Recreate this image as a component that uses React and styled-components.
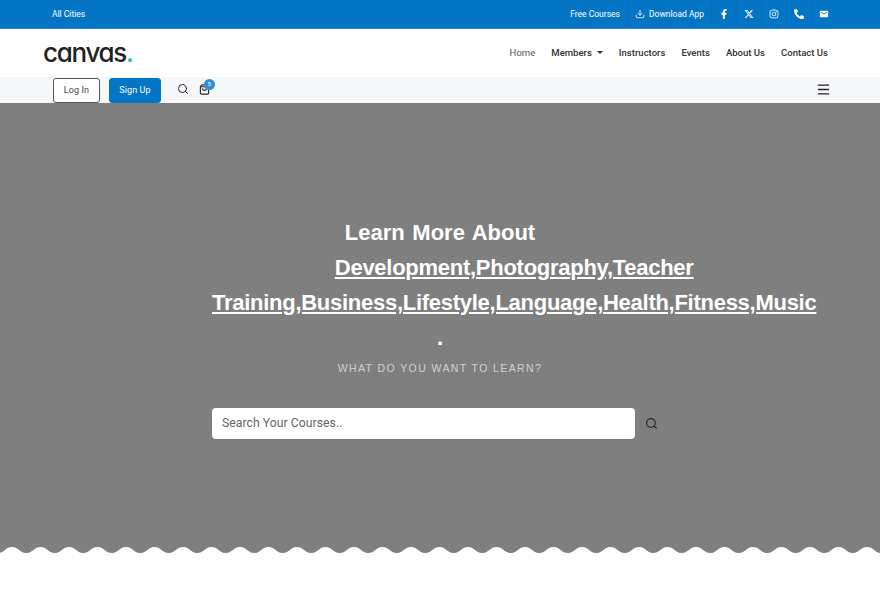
import React from "react";
import styled, { createGlobalStyle } from "styled-components";
import { FaFacebookF, FaInstagram, FaPhoneAlt } from "react-icons/fa";
import { FaXTwitter } from "react-icons/fa6";
import { MdEmail } from "react-icons/md";
import { Download, Search, ShoppingBag, Menu } from "lucide-react";

const GlobalStyle = createGlobalStyle`
  * { box-sizing: border-box; }
  html, body { margin: 0; padding: 0; background: #fff; }
  body { font-family: "Liberation Sans", Arial, sans-serif; color: #333; }
`;

const TopBar = styled.div`
  height: 29px;
  background: #0474c4;
  border-bottom: 1px solid #2c8ad0;
  display: flex;
  align-items: center;
  justify-content: space-between;
  padding: 0 44px 1px 52px;
  color: #fff;
  font-family: "Roboto", sans-serif;
  font-size: 8.5px;
`;

const TopLinks = styled.div`
  display: flex;
  align-items: center;
  height: 100%;
`;

const TopLink = styled.a`
  display: flex;
  align-items: center;
  gap: 4px;
  height: 100%;
  padding: 0 7px;
  color: #fff;
  border-left: ${(p) => (p.$divided ? "1px solid #0a6cb6" : "none")};
`;

const Social = styled.a`
  width: 25px;
  height: 100%;
  display: flex;
  align-items: center;
  justify-content: center;
  color: #fff;
  font-size: 10px;
  border-left: 1px solid #0a6cb6;
`;

const Header = styled.div`
  height: 48px;
  background: #fff;
  display: flex;
  align-items: center;
  justify-content: space-between;
  padding: 0 52px 1px 43px;
`;

const Logo = styled.div`
  font-family: "Inter", sans-serif;
  font-feature-settings: "cv11";
  font-size: 26px;
  font-weight: 500;
  letter-spacing: -1.3px;
  color: #222;
  line-height: 1;
  span { color: #1abfb0; }
`;

const Nav = styled.nav`
  display: flex;
  align-items: center;
  gap: 16px;
  font-family: "Roboto", sans-serif;
  font-size: 9.55px;
`;

const NavItem = styled.a`
  color: ${(p) => (p.$active ? "#555" : "#333")};
  font-weight: ${(p) => (p.$active ? 400 : 500)};
  display: flex;
  align-items: center;
  gap: 5px;
`;

const Caret = styled.i`
  width: 0;
  height: 0;
  border-left: 3px solid transparent;
  border-right: 3px solid transparent;
  border-top: 3px solid #333;
`;

const SubBar = styled.div`
  height: 26px;
  background: #f5f7fa;
  display: flex;
  align-items: center;
  justify-content: space-between;
  padding: 0 49px 2px 53px;
`;

const SubLeft = styled.div`
  display: flex;
  align-items: center;
  height: 24px;
`;

const Button = styled.a`
  display: flex;
  align-items: center;
  justify-content: center;
  align-self: flex-start;
  height: 25px;
  margin-top: 1px;
  padding-bottom: 2px;
  width: ${(p) => p.$w}px;
  margin-right: 9px;
  border-radius: 3px;
  font-family: "Roboto", sans-serif;
  font-size: 9px;
  letter-spacing: 0.1px;
  background: ${(p) => (p.$primary ? "#0474c4" : "#fff")};
  color: ${(p) => (p.$primary ? "#fff" : "#444")};
  border: 1px solid ${(p) => (p.$primary ? "#0474c4" : "#555")};
`;

const IconBtn = styled.span`
  position: relative;
  display: flex;
  margin-left: ${(p) => p.$ml || 0}px;
  color: #222;
`;

const Badge = styled.span`
  position: absolute;
  top: -5px;
  left: 5px;
  width: 11px;
  height: 11px;
  border-radius: 50%;
  background: #2f8fd6;
  color: #fff;
  font-size: 6px;
  display: flex;
  align-items: center;
  justify-content: center;
`;

const Hero = styled.section`
  position: relative;
  height: 450px;
  background: #7f7f7f;
  display: flex;
  justify-content: center;
  padding-top: 112px;
`;

const HeroInner = styled.div`
  width: 456px;
  text-align: center;
`;

const Title = styled.h2`
  margin: 0;
  color: #fff;
  font-size: 22px;
  font-weight: 700;
  line-height: 35px;
  word-spacing: 1.5px;
  a {
    color: #fff;
    text-decoration: underline;
    display: inline-block;
    letter-spacing: -0.27px;
    word-spacing: 0;
  }
`;

const Lead = styled.p`
  margin: 4px 0 0;
  font-size: 10.5px;
  line-height: 18px;
  letter-spacing: 1.4px;
  text-transform: uppercase;
  color: #d0d0d0;
`;

const SearchRow = styled.div`
  display: flex;
  align-items: center;
  margin-top: 31px;
`;

const SearchInput = styled.div`
  width: 423px;
  height: 31px;
  background: #fff;
  border-radius: 4px;
  padding: 0 10px 2px;
  display: flex;
  align-items: center;
  font-family: "Roboto", sans-serif;
  font-size: 12.2px;
  letter-spacing: 0.05px;
  color: #666;
  text-align: left;
`;

const SearchBtn = styled.span`
  width: 32px;
  display: flex;
  justify-content: center;
  color: #222;
`;

const Wave = styled.svg`
  position: absolute;
  left: 0;
  bottom: 0;
  width: 100%;
  height: 6px;
  display: block;
`;

const Spacer = styled.div`
  height: 46px;
  background: #fff;
`;

function wavePath() {
  const period = 28.5;
  let d = "M-31 6";
  for (let x = -30.75; x < 900; x += period) {
    d += ` C${x + period * 0.25} 6 ${x + period * 0.25} 0 ${x + period * 0.5} 0 C${x + period * 0.75} 0 ${x + period * 0.75} 6 ${x + period} 6`;
  }
  return d + " L900 6 Z";
}

export default function App() {
  return (
    <>
      <GlobalStyle />
      <TopBar>
        <span>All Cities</span>
        <TopLinks>
          <TopLink>Free Courses</TopLink>
          <TopLink $divided>
            <Download size={10} />
            Download App
          </TopLink>
          <Social><FaFacebookF /></Social>
          <Social><FaXTwitter /></Social>
          <Social><FaInstagram /></Social>
          <Social><FaPhoneAlt /></Social>
          <Social><MdEmail /></Social>
        </TopLinks>
      </TopBar>
      <Header>
        <Logo>canvas<span>.</span></Logo>
        <Nav>
          <NavItem $active>Home</NavItem>
          <NavItem>Members <Caret /></NavItem>
          <NavItem>Instructors</NavItem>
          <NavItem>Events</NavItem>
          <NavItem>About Us</NavItem>
          <NavItem>Contact Us</NavItem>
        </Nav>
      </Header>
      <SubBar>
        <SubLeft>
          <Button $w={47}>Log In</Button>
          <Button $primary $w={52}>Sign Up</Button>
          <IconBtn $ml={7}><Search size={12} /></IconBtn>
          <IconBtn $ml={10}>
            <ShoppingBag size={11} strokeWidth={2.4} />
            <Badge>5</Badge>
          </IconBtn>
        </SubLeft>
        <Menu size={15} strokeWidth={2.2} color="#222" />
      </SubBar>
      <Hero>
        <HeroInner>
          <Title>
            Learn More About{" "}
            <a>Development,Photography,Teacher Training,Business,Lifestyle,Language,Health,Fitness,Music</a>
            .
          </Title>
          <Lead>What do you want to learn?</Lead>
          <SearchRow>
            <SearchInput>Search Your Courses..</SearchInput>
            <SearchBtn><Search size={13} /></SearchBtn>
          </SearchRow>
        </HeroInner>
        <Wave viewBox="0 0 880 6" preserveAspectRatio="none">
          <path d={wavePath()} fill="#fff" />
        </Wave>
      </Hero>
      <Spacer />
    </>
  );
}
